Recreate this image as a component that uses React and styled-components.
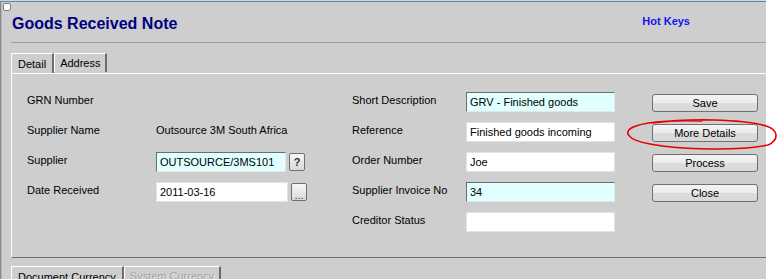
import React from 'react';
import styled, { createGlobalStyle, css } from 'styled-components';

const GlobalStyle = createGlobalStyle`
	body {
		margin: 0;
		background: #ffffff;
		font-family: 'Liberation Sans', Arial, sans-serif;
	}
`;

const Page = styled.div`
	position: relative;
	width: 777px;
	height: 279px;
	overflow: hidden;
`;

const Window = styled.div`
	position: relative;
	width: 766px;
	height: 279px;
	overflow: hidden;
	background: #cecece;
	box-shadow: inset 0 1px 0 #c5d9ee, inset 0 2px 0 #6f8294, inset 1px 0 0 #8a8a8a,
		inset 2px 0 0 #b4b4b4;
`;

const CornerBox = styled.span`
	position: absolute;
	left: 3px;
	top: 3px;
	width: 6px;
	height: 6px;
	background: #ffffff;
	border: 1px solid #7e7e7e;
	border-radius: 2px;
`;

const Header = styled.div`
	height: 40px;
	box-sizing: border-box;
	margin-top: 2px;
	padding: 2px 76px 0 12px;
	display: flex;
	align-items: center;
	justify-content: space-between;
`;

const Title = styled.h1`
	margin: 0;
	font-size: 16px;
	font-weight: bold;
	color: #000080;
	line-height: 19px;
`;

const HotKeys = styled.span`
	font-size: 11px;
	font-weight: bold;
	color: #1414f0;
	margin-top: -4px;
`;

const Divider = styled.div`
	height: 1px;
	margin-left: 11px;
	background: #a0a0a0;
`;

const TabBar = styled.div`
	display: flex;
	margin: ${({ top }) => top}px 0 0 11px;
`;

const Tab = styled.div`
	box-sizing: border-box;
	height: ${({ active }) => (active ? '20px' : '19px')};
	padding: 0 ${({ pad }) => pad}px;
	border-top: 1px solid #ffffff;
	border-left: 1px solid #ffffff;
	border-right: 2px solid #6c6c6c;
	font-size: 11px;
	line-height: ${({ active }) => (active ? '21px' : '19px')};
	color: ${({ disabled }) => (disabled ? '#a2a2a2' : '#000000')};
	${({ disabled }) =>
		disabled &&
		css`
			text-shadow: 1px 1px 0 #e6e6e6;
		`}
`;

const Panel = styled.div`
	margin-left: 11px;
	height: 185px;
	box-sizing: border-box;
	border-top: 1px solid #ffffff;
	border-left: 1px solid #ffffff;
	border-bottom: 1px solid #6e6e6e;
	padding: 13px 0 0 15px;
`;

const FieldGrid = styled.div`
	display: grid;
	grid-template-columns: 129px 196px 114px 186px 106px;
	grid-auto-rows: 30px;
	align-items: center;
	font-size: 11px;
	color: #000000;
`;

const Label = styled.span`
	padding-bottom: 4px;
	white-space: nowrap;
	grid-column: ${({ col }) => col};
`;

const Value = styled.span`
	padding-bottom: 4px;
	white-space: nowrap;
`;

const InputRow = styled.div`
	display: flex;
	align-items: center;
	gap: 3px;
`;

const Input = styled.div`
	width: ${({ w }) => w}px;
	height: 20px;
	box-sizing: border-box;
	padding-left: 3px;
	font-size: 11px;
	line-height: 18px;
	white-space: nowrap;
	overflow: hidden;
	${({ mandatory }) =>
		mandatory
			? css`
					background: #e0ffff;
					border: 1px solid #e6e6e6;
					border-top-color: #6e6e6e;
					border-left-color: #6e6e6e;
			  `
			: css`
					background: #ffffff;
					border: 1px solid #e3e3e3;
			  `}
`;

const SmallButton = styled.div`
	width: 16px;
	height: 18px;
	box-sizing: border-box;
	border: 1px solid #707070;
	border-radius: 2px;
	background: linear-gradient(#f6f6f6, #dadada);
	font-size: 11px;
	font-weight: ${({ dots }) => (dots ? 'normal' : 'bold')};
	color: #1d2f55;
	text-align: center;
	line-height: ${({ dots }) => (dots ? '22px' : '16px')};
`;

const ActionButton = styled.button`
	width: 106px;
	height: 18px;
	margin-top: 1px;
	padding: 0;
	border: 1px solid #707070;
	border-radius: 3px;
	background: linear-gradient(#f4f4f4 0%, #ebebeb 50%, #dcdcdc 51%, #d8d8d8 100%);
	font-family: 'Liberation Sans', Arial, sans-serif;
	font-size: 11px;
	color: #000000;
	line-height: 16px;
`;

const Annotation = styled.svg`
	position: absolute;
	left: 0;
	top: 0;
	pointer-events: none;
`;

const rows = [
	{
		left: 'GRN Number',
		right: 'Short Description',
		input: { text: 'GRV - Finished goods', mandatory: true },
		button: 'Save'
	},
	{
		left: 'Supplier Name',
		value: 'Outsource 3M South Africa',
		right: 'Reference',
		input: { text: 'Finished goods incoming' },
		button: 'More Details'
	},
	{
		left: 'Supplier',
		field: { text: 'OUTSOURCE/3MS101', mandatory: true, btn: '?' },
		right: 'Order Number',
		input: { text: 'Joe' },
		button: 'Process'
	},
	{
		left: 'Date Received',
		field: { text: '2011-03-16', btn: '...' },
		right: 'Supplier Invoice No',
		input: { text: '34', mandatory: true },
		button: 'Close'
	},
	{ right: 'Creditor Status', input: { text: '' } }
];

const App = () => (
	<Page>
		<GlobalStyle />
		<Window>
			<CornerBox />
			<Header>
				<Title>Goods Received Note</Title>
				<HotKeys>Hot Keys</HotKeys>
			</Header>
			<Divider />
			<TabBar top={10}>
				<Tab active pad={6}>Detail</Tab>
				<Tab pad={5}>Address</Tab>
			</TabBar>
			<Panel>
				<FieldGrid>
					{rows.map((row, i) => (
						<React.Fragment key={i}>
							<Label col={1}>{row.left || ''}</Label>
							{row.field ? (
								<InputRow>
									<Input w={row.field.btn === '?' ? 130 : 132} mandatory={row.field.mandatory}>
										{row.field.text}
									</Input>
									<SmallButton dots={row.field.btn === '...'}>{row.field.btn}</SmallButton>
								</InputRow>
							) : (
								<Value>{row.value || ''}</Value>
							)}
							<Label col={3}>{row.right}</Label>
							<Input w={149} mandatory={row.input.mandatory}>
								{row.input.text}
							</Input>
							{row.button ? <ActionButton>{row.button}</ActionButton> : <span />}
						</React.Fragment>
					))}
				</FieldGrid>
			</Panel>
			<TabBar top={8}>
				<Tab active pad={6}>Document Currency</Tab>
				<Tab disabled pad={5}>System Currency</Tab>
			</TabBar>
		</Window>
		<Annotation width='777' height='279'>
			<path
				d='M 652 123 C 690 118, 742 119, 766 126 C 779 130, 779 140, 768 145 C 740 151, 680 150, 650 144 C 627 140, 621 131, 636 126 C 650 121, 680 120, 702 121'
				fill='none'
				stroke='#e40000'
				strokeWidth='1.6'
				strokeLinecap='round'
			/>
		</Annotation>
	</Page>
);

export default App;
